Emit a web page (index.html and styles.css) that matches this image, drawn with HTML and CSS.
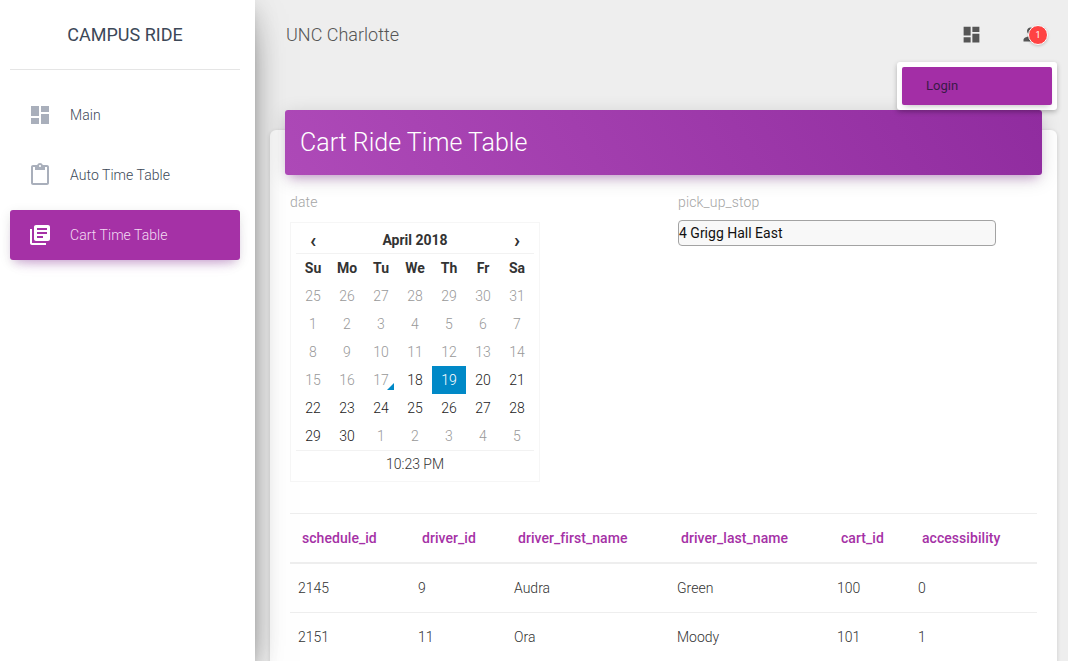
FILE: index.html
```html
<!DOCTYPE html>
<html lang="en">
<head>
  <meta charset="UTF-8">
  <title>Campus Ride</title>
  <link rel="stylesheet" href="styles.css">
</head>
<body>
  <div class="wrapper">
    <aside class="sidebar">
      <div class="logo">CAMPUS RIDE</div>
      <nav class="nav">
        <a class="nav-item">
          <svg class="nav-icon" viewBox="0 0 24 24"><path d="M3 13h8V3H3v10zm0 8h8v-6H3v6zm10 0h8V11h-8v10zm0-18v6h8V3h-8z"/></svg>
          <span>Main</span>
        </a>
        <a class="nav-item">
          <svg class="nav-icon" viewBox="0 0 24 24"><path d="M19 2h-4.18C14.4.84 13.3 0 12 0c-1.3 0-2.4.84-2.82 2H5c-1.1 0-2 .9-2 2v16c0 1.1.9 2 2 2h14c1.1 0 2-.9 2-2V4c0-1.1-.9-2-2-2zm-7 0c.55 0 1 .45 1 1s-.45 1-1 1-1-.45-1-1 .45-1 1-1zm7 18H5V4h2v3h10V4h2v16z"/></svg>
          <span>Auto Time Table</span>
        </a>
        <a class="nav-item active">
          <svg class="nav-icon" viewBox="0 0 24 24"><path d="M4 6H2v14c0 1.1.9 2 2 2h14v-2H4V6zm16-4H8c-1.1 0-2 .9-2 2v12c0 1.1.9 2 2 2h12c1.1 0 2-.9 2-2V4c0-1.1-.9-2-2-2zm-1 9H9V9h10v2zm-4 4H9v-2h6v2zm4-8H9V5h10v2z"/></svg>
          <span>Cart Time Table</span>
        </a>
      </nav>
    </aside>

    <main class="main">
      <header class="navbar">
        <div class="brand">UNC Charlotte</div>
        <div class="nav-actions">
          <svg class="top-icon" viewBox="0 0 24 24"><path d="M3 13h8V3H3v10zm0 8h8v-6H3v6zm10 0h8V11h-8v10zm0-18v6h8V3h-8z"/></svg>
          <div class="user-menu">
            <svg class="top-icon" viewBox="0 0 24 24"><path d="M12 12c2.21 0 4-1.79 4-4s-1.79-4-4-4-4 1.79-4 4 1.79 4 4 4zm0 2c-2.67 0-8 1.34-8 4v2h16v-2c0-2.66-5.33-4-8-4z"/></svg>
            <span class="badge">1</span>
          </div>
        </div>
        <div class="dropdown">
          <a class="dropdown-item">Login</a>
        </div>
      </header>

      <section class="card">
        <div class="card-header">Cart Ride Time Table</div>
        <div class="card-body">
          <div class="form-row">
            <div class="field">
              <label class="field-label">date</label>
              <div class="calendar">
                <div class="cal-head">
                  <span class="cal-arrow">‹</span>
                  <span class="cal-month">April 2018</span>
                  <span class="cal-arrow">›</span>
                </div>
                <div class="cal-grid">
                  <span class="dow">Su</span><span class="dow">Mo</span><span class="dow">Tu</span><span class="dow">We</span><span class="dow">Th</span><span class="dow">Fr</span><span class="dow">Sa</span>
                  <span class="day off">25</span><span class="day off">26</span><span class="day off">27</span><span class="day off">28</span><span class="day off">29</span><span class="day off">30</span><span class="day off">31</span>
                  <span class="day off">1</span><span class="day off">2</span><span class="day off">3</span><span class="day off">4</span><span class="day off">5</span><span class="day off">6</span><span class="day off">7</span>
                  <span class="day off">8</span><span class="day off">9</span><span class="day off">10</span><span class="day off">11</span><span class="day off">12</span><span class="day off">13</span><span class="day off">14</span>
                  <span class="day off">15</span><span class="day off">16</span><span class="day off today">17</span><span class="day">18</span><span class="day selected">19</span><span class="day">20</span><span class="day">21</span>
                  <span class="day">22</span><span class="day">23</span><span class="day">24</span><span class="day">25</span><span class="day">26</span><span class="day">27</span><span class="day">28</span>
                  <span class="day">29</span><span class="day">30</span><span class="day off">1</span><span class="day off">2</span><span class="day off">3</span><span class="day off">4</span><span class="day off">5</span>
                </div>
                <div class="cal-time">10:23 PM</div>
              </div>
            </div>
            <div class="field">
              <label class="field-label">pick_up_stop</label>
              <input class="stop-input" type="text" value="4 Grigg Hall East">
            </div>
          </div>

          <table class="rides">
            <colgroup>
              <col class="c1"><col class="c2"><col class="c3"><col class="c4"><col class="c5"><col class="c6">
            </colgroup>
            <thead>
              <tr>
                <th>schedule_id</th>
                <th>driver_id</th>
                <th>driver_first_name</th>
                <th>driver_last_name</th>
                <th>cart_id</th>
                <th>accessibility</th>
              </tr>
            </thead>
            <tbody>
              <tr>
                <td>2145</td><td>9</td><td>Audra</td><td>Green</td><td>100</td><td>0</td>
              </tr>
              <tr>
                <td>2151</td><td>11</td><td>Ora</td><td>Moody</td><td>101</td><td>1</td>
              </tr>
            </tbody>
          </table>
        </div>
      </section>
    </main>
  </div>
</body>
</html>
```

FILE: styles.css
```css
* {
  box-sizing: border-box;
}
html, body {
  margin: 0;
  height: 100%;
  overflow: hidden;
}
body {
  font-family: Roboto, "Liberation Sans", sans-serif;
  font-weight: 300;
  color: #333;
  background-color: #eee;
}

.wrapper {
  display: flex;
  height: 661px;
  overflow: hidden;
}

/* sidebar */
.sidebar {
  flex: 0 0 255px;
  background-color: #fff;
  box-shadow: 0 16px 38px -12px rgba(0, 0, 0, 0.56), 0 4px 25px 0 rgba(0, 0, 0, 0.12), 0 8px 10px -5px rgba(0, 0, 0, 0.2);
  z-index: 2;
}
.logo {
  height: 70px;
  margin: 0 15px 0 10px;
  border-bottom: 1px solid #e5e5e5;
  font-size: 18px;
  font-weight: 400;
  line-height: 69px;
  text-align: center;
  color: #3c4858;
}
.nav {
  display: flex;
  flex-direction: column;
  gap: 10px;
  margin: 20px 15px 0 10px;
}
.nav-item {
  display: flex;
  align-items: center;
  gap: 18px;
  height: 50px;
  padding-left: 18px;
  border-radius: 3px;
  font-size: 14px;
  letter-spacing: 0.05px;
  color: #3c4858;
}
.nav-icon {
  width: 24px;
  height: 24px;
  fill: #a9afbb;
}
.nav-item.active {
  background-color: #a531a6;
  color: #f3dcf3;
  box-shadow: 0 10px 16px -10px rgba(156, 39, 176, 0.28), 0 3px 12px 0 rgba(0, 0, 0, 0.1), 0 7px 8px -5px rgba(156, 39, 176, 0.2);
}
.nav-item.active .nav-icon {
  fill: #fff;
}

/* top bar */
.main {
  flex: 1;
  min-width: 0;
}
.navbar {
  position: relative;
  display: flex;
  justify-content: space-between;
  align-items: center;
  height: 70px;
  padding: 0 27px 2px 31px;
}
.brand {
  font-size: 18px;
  color: #555;
}
.nav-actions {
  display: flex;
  align-items: center;
  gap: 38px;
}
.top-icon {
  display: block;
  width: 21px;
  height: 21px;
  fill: #555;
}
.user-menu {
  position: relative;
  width: 21px;
}
.badge {
  position: absolute;
  top: 1.5px;
  left: 8px;
  width: 20px;
  height: 20px;
  border: 1px solid #fff;
  border-radius: 50%;
  background-color: #ff4343;
  box-shadow: 0 1px 3px rgba(0, 0, 0, 0.2);
  color: #fff;
  font-size: 9px;
  font-weight: 400;
  line-height: 18px;
  text-align: center;
}
.dropdown {
  position: absolute;
  top: 62px;
  right: 11px;
  width: 160px;
  height: 48px;
  padding: 5px;
  border-radius: 3px;
  background-color: #fff;
  box-shadow: 0 2px 5px 0 rgba(0, 0, 0, 0.26);
  z-index: 3;
}
.dropdown-item {
  display: block;
  height: 38px;
  padding-left: 24px;
  border-radius: 2px;
  background-color: #a32ea6;
  color: #3a1a48;
  font-size: 13px;
  font-weight: 400;
  line-height: 38px;
  box-shadow: 0 4px 6px -3px rgba(0, 0, 0, 0.25);
}

/* card */
.card {
  margin: 60px 11px 0 15px;
  border-radius: 6px;
  background-color: #fff;
  box-shadow: 0 1px 4px 0 rgba(0, 0, 0, 0.14);
  height: 600px;
}
.card-header {
  position: relative;
  top: -20px;
  height: 65px;
  margin: 0 15px -20px;
  padding-left: 15px;
  border-radius: 3px;
  background: linear-gradient(60deg, #ae4ab8, #902c9f);
  box-shadow: 0 4px 20px 0 rgba(0, 0, 0, 0.14), 0 7px 10px -5px rgba(156, 39, 176, 0.4);
  color: #fff;
  font-size: 25px;
  line-height: 66px;
}
.card-body {
  padding: 19px 20px 0;
}

.form-row {
  display: grid;
  grid-template-columns: 388px 1fr;
}
.field-label {
  display: block;
  height: 16px;
  margin-bottom: 12px;
  font-size: 14px;
  line-height: 16px;
  letter-spacing: 0.15px;
  color: #a5a5a5;
}
.stop-input {
  display: block;
  width: 318px;
  height: 26px;
  margin-top: -2px;
  padding: 0;
  border: 1px solid #a3a3a3;
  border-radius: 4px;
  background-color: #f8f8f8;
  font-family: Roboto, "Liberation Sans", sans-serif;
  font-size: 14px;
  font-weight: 400;
  color: #111;
}

/* calendar */
.calendar {
  width: 250px;
  height: 260px;
  padding: 3px 5px;
  border: 1px solid #f6f6f6;
}
.cal-head {
  display: flex;
  justify-content: space-between;
  align-items: center;
  height: 28px;
  padding: 0 12px 0 12px;
  border-bottom: 1px solid #f2f2f2;
  font-size: 14px;
  font-weight: 700;
  color: #333;
}
.cal-arrow {
  width: 10px;
  font-size: 20px;
  line-height: 20px;
  text-align: center;
}
.cal-grid {
  display: grid;
  grid-template-columns: repeat(7, 34px);
  grid-auto-rows: 28px;
  border-bottom: 1px solid #f2f2f2;
}
.dow, .day {
  font-size: 14px;
  line-height: 28px;
  text-align: center;
}
.dow {
  font-weight: 700;
  color: #333;
}
.day {
  position: relative;
  font-weight: 300;
  color: #222;
}
.day.off {
  color: #999;
}
.day.selected {
  background-color: #0089c7;
  color: #fff;
}
.day.today::before {
  content: "";
  position: absolute;
  right: 4px;
  bottom: 4px;
  border-bottom: 7px solid #0089c7;
  border-left: 7px solid transparent;
}
.cal-time {
  height: 26px;
  font-size: 14px;
  line-height: 26px;
  text-align: center;
  color: #333;
}

/* table */
.rides {
  width: 747px;
  margin-top: 31px;
  border-collapse: collapse;
  table-layout: fixed;
  font-size: 14px;
}
.c1 { width: 120px; }
.c2 { width: 96px; }
.c3 { width: 163px; }
.c4 { width: 160px; }
.c5 { width: 81px; }
.c6 { width: 127px; }
.rides th {
  height: 49px;
  padding: 0 12px;
  border-top: 1px solid #eee;
  border-bottom: 2px solid #eee;
  font-weight: 500;
  letter-spacing: 0.05px;
  text-align: left;
  color: #a531a6;
}
.rides td {
  height: 49px;
  padding: 0 8px;
  border-bottom: 1px solid #eee;
  color: #333;
}
.rides tbody tr:first-child td {
  height: 50px;
}
```
